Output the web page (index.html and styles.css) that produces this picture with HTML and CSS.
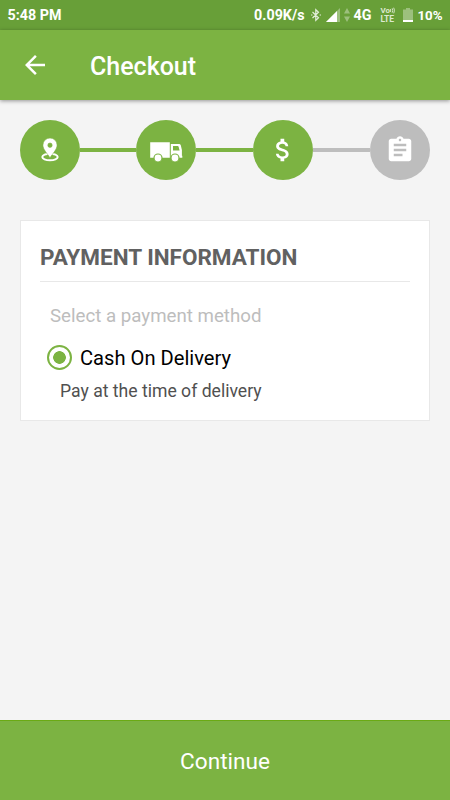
FILE: index.html
```html
<!DOCTYPE html>
<html lang="en">
<head>
<meta charset="utf-8">
<title>Checkout</title>
<link rel="stylesheet" href="styles.css">
</head>
<body>
<div class="status">
  <span class="time">5:48 PM</span>
  <span class="speed">0.09K/s</span>
  <svg class="bluetooth" width="10" height="14" viewBox="0 0 10 14"><path d="M1.500 4 7.500 9.700 4.800 12.400V1.600L7.500 4.300 1.500 10M0 7h1.400M8.600 7H10"/></svg>
  <svg class="signal" width="14" height="14" viewBox="0 0 14 14"><path class="faint" d="M14 0v14H0z"/><path d="M11 3v11H0z"/></svg>
  <svg class="data" width="6" height="14" viewBox="0 0 6 14"><path class="faint" d="M3 0 6 5.500H0zM3 14 0 8.500h6z"/></svg>
  <span class="network">4G</span>
  <span class="volte"><span>Vo<svg width="5" height="7" viewBox="0 0 5 6"><path d="M.6 1.500v3M2.200.8q1.200 2.200 0 4.400M3.700.2q1.600 2.800 0 5.600"/></svg></span><span class="lte">LTE</span></span>
  <svg class="battery" width="10" height="14" viewBox="0 0 10 14"><path class="faint" d="M3 0h4v1.500h3V12H0V1.500h3z"/><path d="M0 12h10v2H0z"/></svg>
  <span class="percent">10%</span>
</div>
<header class="header">
  <svg class="back" width="30" height="30" viewBox="0 0 24 24"><path d="M20 11H7.830l5.590-5.590L12 4l-8 8 8 8 1.410-1.410L7.830 13H20z"/></svg>
  <h1>Checkout</h1>
</header>
<main>
  <div class="steps">
    <div class="step"><svg width="60" height="60" viewBox="0 0 60 60"><ellipse class="ring" cx="30" cy="37" rx="7.700" ry="3.300"/><path class="pin" fill-rule="evenodd" d="M30 18a7.100 7.100 0 0 0-7.100 7.100c0 4.300 4.300 8.400 7.100 12.700 2.800-4.300 7.100-8.400 7.100-12.700a7.100 7.100 0 0 0-7.100-7.100zm0 5a2.200 2.200 0 1 1 0 4.400 2.200 2.200 0 0 1 0-4.400z"/></svg></div>
    <div class="line first"></div>
    <div class="step"><svg width="60" height="60" viewBox="0 0 60 60"><path fill-rule="evenodd" d="M14.200 22.200h19.600v15.600H14.200zM34.800 24h8.300q1.200 0 1.700 1.200l1.100 4.800v5.800h.4v2H34.800zm2.200 2v4.600h6.600l-1-3.800q-.2-.8-1-.8z"/><g class="wheel"><circle cx="22" cy="38" r="4"/><circle cx="39" cy="38" r="4"/></g></svg></div>
    <div class="line"></div>
    <div class="step"><svg width="30" height="30" viewBox="0 0 24 24"><path d="M11.800 10.900c-2.270-.59-3-1.200-3-2.150 0-1.090 1.010-1.850 2.700-1.850 1.780 0 2.440.85 2.500 2.100h2.210c-.07-1.720-1.120-3.300-3.210-3.810V3h-3v2.160c-1.940.42-3.500 1.680-3.500 3.610 0 2.310 1.910 3.460 4.700 4.130 2.500.6 3 1.480 3 2.410 0 .69-.49 1.790-2.700 1.790-2.060 0-2.870-.92-2.980-2.100h-2.200c.12 2.190 1.760 3.420 3.680 3.830V21h3v-2.150c1.950-.37 3.500-1.500 3.500-3.550 0-2.840-2.430-3.810-4.700-4.400z"/></svg></div>
    <div class="line pending"></div>
    <div class="step pending"><svg width="30" height="30" viewBox="0 0 24 24"><path d="M19 3h-4.180C14.400 1.840 13.300 1 12 1c-1.300 0-2.400.84-2.820 2H5c-1.100 0-2 .9-2 2v14c0 1.100.9 2 2 2h14c1.100 0 2-.9 2-2V5c0-1.100-.9-2-2-2zm-7 0c.55 0 1 .45 1 1s-.45 1-1 1-1-.45-1-1 .45-1 1-1zm2 14H7v-2h7v2zm3-4H7v-2h10v2zm0-4H7V7h10v2z"/></svg></div>
  </div>
  <section class="card">
    <h2>PAYMENT INFORMATION</h2>
    <p class="hint">Select a payment method</p>
    <div class="option"><span class="radio"></span><span class="label">Cash On Delivery</span></div>
    <p class="note">Pay at the time of delivery</p>
  </section>
</main>
<button class="continue">Continue</button>
</body>
</html>
```

FILE: styles.css
```css
* { box-sizing: border-box; }
body {
  margin: 0;
  height: 800px;
  display: flex;
  flex-direction: column;
  background: #f4f4f4;
  font-family: Roboto, "Liberation Sans", sans-serif;
  overflow: hidden;
}
h1, h2, p { margin: 0; }
svg { display: block; flex: none; fill: #fff; }
.status {
  height: 30px;
  flex: none;
  display: flex;
  align-items: center;
  padding: 0 7.5px;
  background: #689f38;
  color: #fff;
  font-size: 14.3px;
  font-weight: 700;
  white-space: nowrap;
}
.time { width: 247px; }
.speed { width: 57.5px; }
.faint { opacity: .35; }
.bluetooth { fill: none; stroke: #e4eedb; stroke-width: 1.2; }
.signal { margin-left: 5px; }
.data { margin-left: 4px; }
.network { margin-left: 3px; width: 27px; }
.volte {
  width: 16px;
  display: flex;
  flex-direction: column;
  font-size: 8px;
  line-height: 8px;
  color: #dce9d0;
}
.volte span { display: flex; height: 8px; }
.volte .lte { font-size: 8.5px; }
.volte svg { fill: none; stroke: #dce9d0; stroke-width: .9; }
.battery { margin-left: 7px; }
.percent { margin-left: 4px; font-size: 13.3px; }
.header {
  height: 70px;
  flex: none;
  display: flex;
  align-items: center;
  padding-left: 20px;
  background: #7cb342;
  color: #fff;
  box-shadow: 0 1px 4px rgba(0, 0, 0, .4);
}
h1 { margin: 3px 0 0 40px; font-size: 25px; font-weight: 500; }
main { flex: 1; padding: 20px 20px 0; }
.steps { display: flex; align-items: center; }
.step {
  width: 60px;
  height: 60px;
  flex: none;
  display: flex;
  align-items: center;
  justify-content: center;
  border-radius: 50%;
  background: #7cb342;
}
.line { flex: 1; height: 4px; background: #7cb342; }
.line.first { flex: none; width: 56.3px; }
.line.pending { flex: none; width: 57px; background: #bdbdbd; }
.step.pending { background: #bdbdbd; }
.ring { fill: none; stroke: #fff; stroke-width: 2; }
.pin { stroke: #7cb342; stroke-width: .6; }
.wheel { stroke: #7cb342; stroke-width: 1.2; }
.card {
  height: 201px;
  margin-top: 40px;
  padding: 0 19px;
  background: #fff;
  border: 1px solid #e8e8e8;
}
h2 {
  height: 61px;
  padding-top: 11px;
  border-bottom: 1px solid #e8e8e8;
  color: #616161;
  font-size: 22.5px;
  line-height: 50px;
  font-weight: 700;
  white-space: nowrap;
}
.hint {
  margin: 18px 0 0 10px;
  color: #bdbdbd;
  font-size: 18.7px;
  line-height: 32px;
}
.option { display: flex; align-items: center; height: 50px; margin-left: 7px; }
.radio {
  width: 25px;
  height: 25px;
  border: 2.500px solid #7cb342;
  border-radius: 50%;
  background: radial-gradient(circle, #7cb342 6px, #fff 6.6px);
}
.label { margin: 2px 0 0 8px; color: #000; font-size: 20.15px; }
.note { margin: -6px 0 0 20px; color: #505050; font-size: 17.6px; line-height: 30px; }
.continue {
  height: 80px;
  flex: none;
  border: 0;
  border-top: 1px solid #6aaa14;
  padding: 2px 0 0;
  background: #7cb342;
  color: #fff;
  font: 22.6px Roboto, "Liberation Sans", sans-serif;
}
```
